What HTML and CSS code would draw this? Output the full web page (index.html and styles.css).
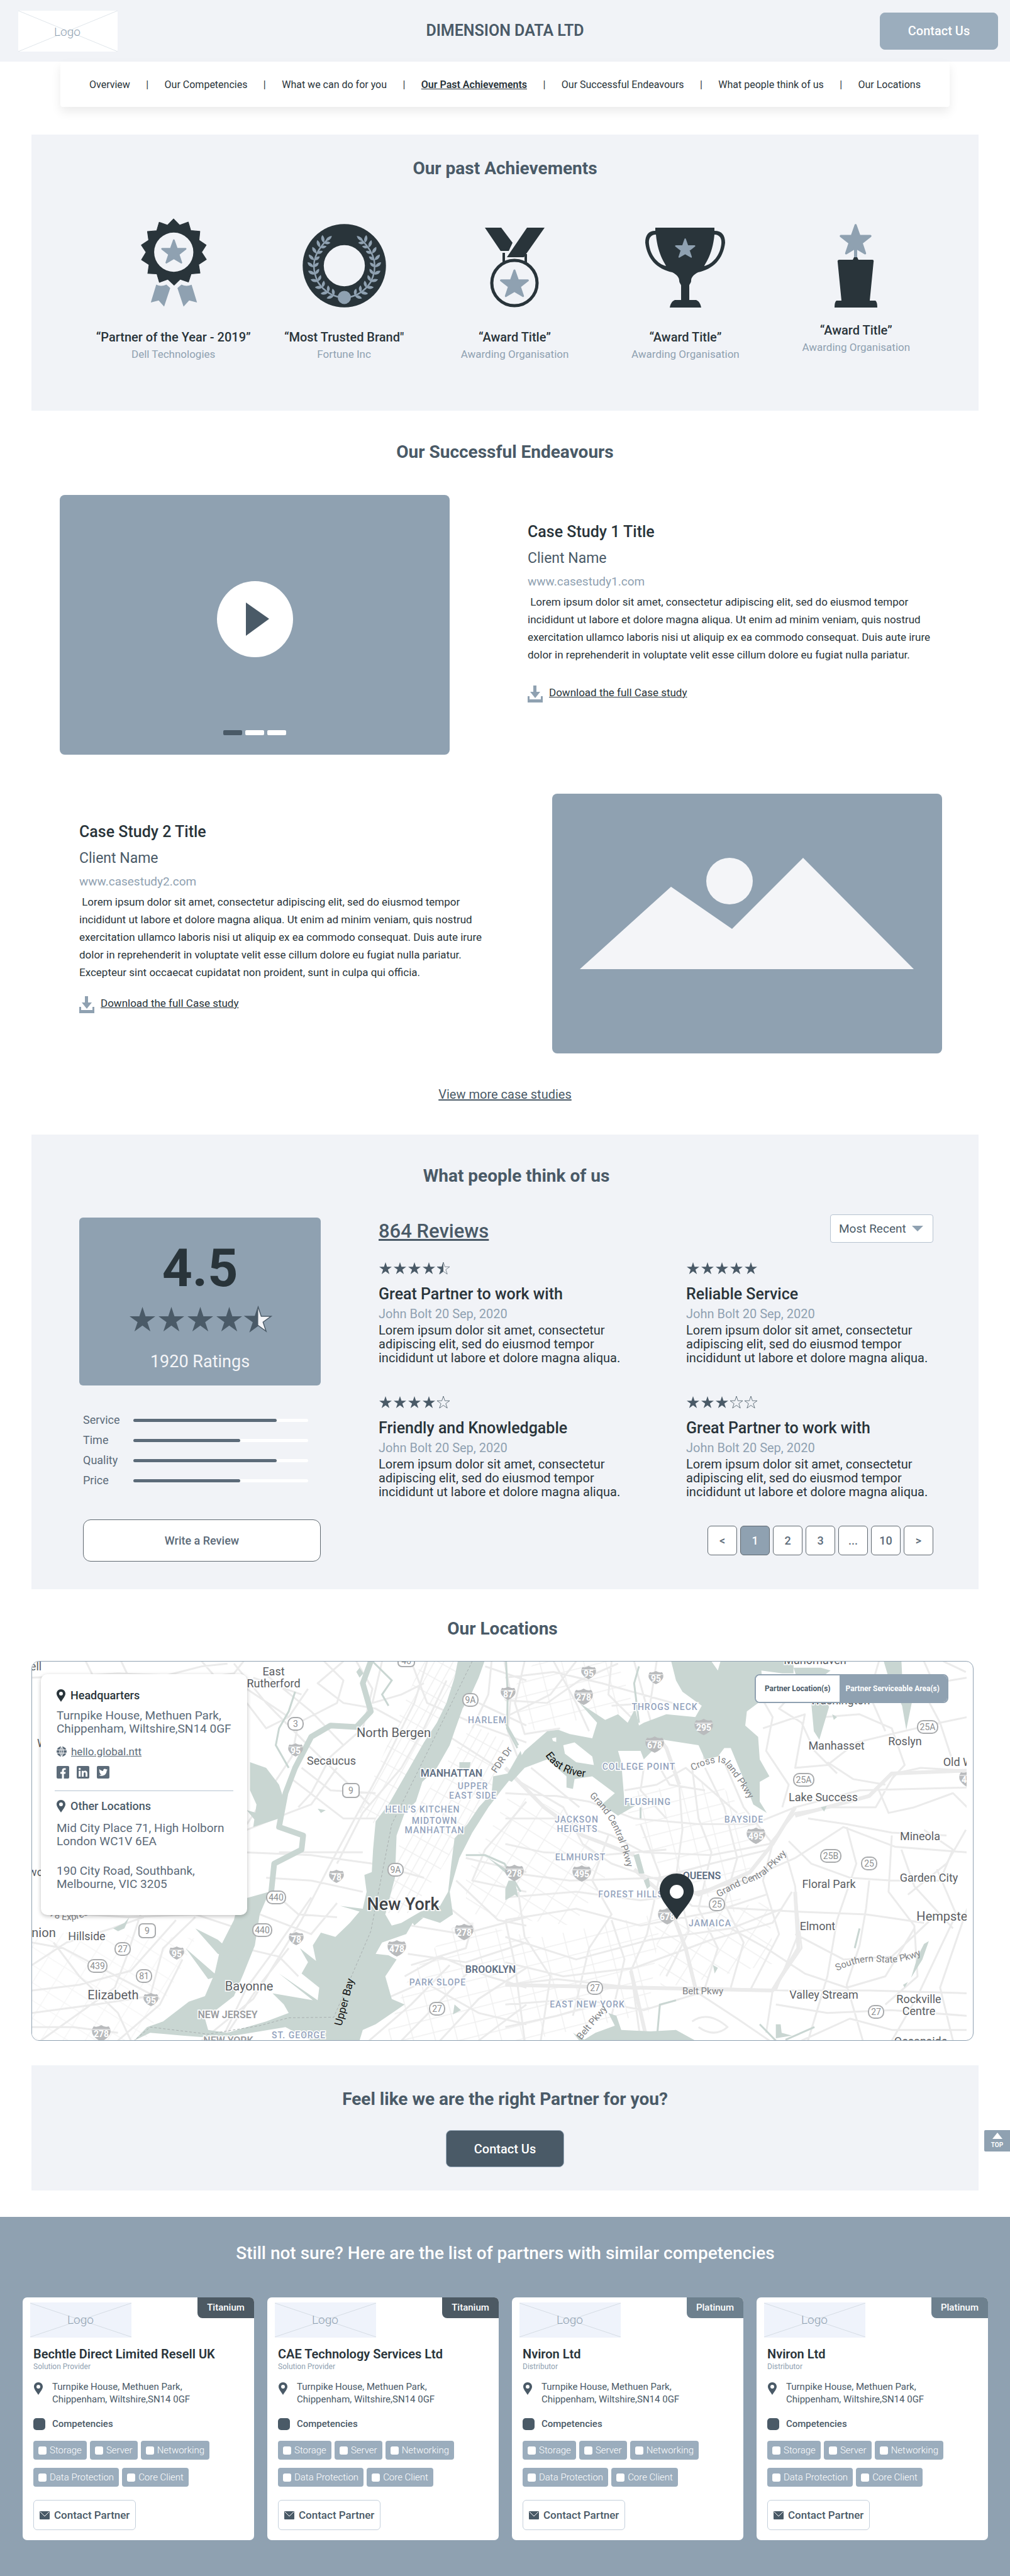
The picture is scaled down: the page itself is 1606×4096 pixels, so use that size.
FILE: index.html
```html
<!DOCTYPE html>
<html lang="en">
<head>
<meta charset="utf-8">
<meta name="viewport" content="width=device-width, initial-scale=1">
<title>Dimension Data Ltd</title>
<link rel="stylesheet" href="styles.css">
</head>
<body>
<svg class="defs" aria-hidden="true">
  <symbol id="star" viewBox="-1 -1 22 21"><path d="M10 0L12.4 7.3H20L13.8 11.8L16.2 19L10 14.5L3.8 19L6.2 11.8L0 7.3H7.6Z" fill="#4a5a67"/></symbol>
  <symbol id="star-half" viewBox="-1 -1 22 21"><path d="M10 0L12.4 7.3H20L13.8 11.8L16.2 19L10 14.5L3.8 19L6.2 11.8L0 7.3H7.6Z" fill="#f4f5f8" stroke="#4a5a67" stroke-width=".7"/><path d="M10 0V14.5L3.8 19L6.2 11.8L0 7.3H7.6Z" fill="#4a5a67"/></symbol>
  <symbol id="star-empty" viewBox="-1 -1 22 21"><path d="M10 0L12.4 7.3H20L13.8 11.8L16.2 19L10 14.5L3.8 19L6.2 11.8L0 7.3H7.6Z" fill="none" stroke="#4a5a67" stroke-width=".8"/></symbol>
  <symbol id="award-star" viewBox="-1 -1 22 21"><path d="M10 .5L12.4 7.3L19.4 7.4L13.8 11.8L16 18.4L10 14.8L4 18.4L6.2 11.8L.6 7.4L7.6 7.3Z" fill="#8fa1b1" stroke="#8fa1b1" stroke-width="1.4" stroke-linejoin="round"/></symbol>
  <symbol id="pin" viewBox="0 0 14 20"><path fill-rule="evenodd" d="M7 0C11 0 14 3 14 7C14 11 10 15 7 20C4 15 0 11 0 7C0 3 3 0 7 0ZM7 4A3 3 0 1 0 7 10A3 3 0 1 0 7 4Z" fill="currentColor"/></symbol>
  <symbol id="download" viewBox="0 0 24 27"><path d="M9 0H14V10H20L12 20L4 10H9ZM0 17H3V22H21V17H24V27H0Z" fill="#8fa1b1"/></symbol>
  <symbol id="mail" viewBox="0 0 16 13"><rect width="16" height="13" rx="1" fill="#4a5a67"/><path d="M1 1L8 8L15 1" fill="none" stroke="#fff" stroke-width="1"/></symbol>
</svg>

<header class="header">
  <svg class="logo-box logo-box--header" viewBox="0 0 158 65" role="img" aria-label="Logo"><rect width="158" height="65" rx="2" fill="#fff"/><path d="M0 0L158 65M0 65L158 0" stroke="#dfe5ea"/><text x="78" y="40" text-anchor="middle">Logo</text></svg>
  <h1 class="header__title">DIMENSION DATA LTD</h1>
  <button class="button button--light" type="button">Contact Us</button>
</header>

<nav class="tabs" aria-label="Sections">
  <a href="#overview">Overview</a><span>|</span>
  <a href="#competencies">Our Competencies</a><span>|</span>
  <a href="#services">What we can do for you</a><span>|</span>
  <a class="is-active" href="#achievements">Our Past Achievements</a><span>|</span>
  <a href="#endeavours">Our Successful Endeavours</a><span>|</span>
  <a href="#reviews">What people think of us</a><span>|</span>
  <a href="#locations">Our Locations</a>
</nav>

<main>
<section class="panel achievements" id="achievements">
  <h2 class="heading">Our past Achievements</h2>
  <ul class="awards">
    <li class="award">
      <svg width="106" height="142" viewBox="30 20 380 510">
        <path d="M220 24L255 60L304 42L318 90L370 95L365 146L406 173L380 214L407 255L363 284L371 333L320 338L305 384L258 368L223 402L187 368L139 386L125 338L73 335L80 285L37 257L63 214L36 173L78 146L71 96L124 91L138 43L185 60Z" fill="#29343a" stroke="#29343a" stroke-width="4" stroke-linejoin="round"/>
        <circle cx="221" cy="214" r="112" fill="#f1f3f7"/>
        <use href="#award-star" x="143" y="132" width="157" height="156"/>
        <path d="M121 399Q150 413 179 399L201 419L166 525L135 490L90 501ZM323 400Q293 412 265 399L242 419L277 525L309 490L354 501Z" fill="#8fa1b1"/>
      </svg>
      <h3>“Partner of the Year - 2019”</h3><p>Dell Technologies</p>
    </li>
    <li class="award">
      <svg width="133" height="133" viewBox="962 42 480 480">
        <defs><g id="pair"><path d="M0 2C-20 2 -32 -8 -34 -26C-14 -24 -2 -14 0 2Z"/><path d="M0 2C20 2 29 -8 30 -24C14 -22 2 -14 0 2Z"/></g></defs>
        <circle cx="1202" cy="282" r="239" fill="#29343a"/><circle cx="1202" cy="282" r="118" fill="#f1f3f7"/>
        <g id="branch">
          <path d="M1180 463C1120 455 1075 415 1050 375C1010 290 1020 215 1105 132" fill="none" stroke="#8fa1b1" stroke-width="9"/>
          <g fill="#8fa1b1">
            <use href="#pair" transform="translate(1140 452) rotate(-60)"/><use href="#pair" transform="translate(1108 433) rotate(-50)"/><use href="#pair" transform="translate(1076 405) rotate(-38)"/><use href="#pair" transform="translate(1050 370) rotate(-25)"/><use href="#pair" transform="translate(1033 330) rotate(-12)"/><use href="#pair" transform="translate(1025 288)"/><use href="#pair" transform="translate(1028 248) rotate(8)"/><use href="#pair" transform="translate(1042 210) rotate(20)"/><use href="#pair" transform="translate(1062 175) rotate(32)"/><use href="#pair" transform="translate(1084 148) rotate(42)"/>
            <path d="M0 2C-12 -6 -14 -22 -6 -42C8 -28 10 -12 0 2Z" transform="translate(1098 138) rotate(58)"/>
          </g>
        </g>
        <use href="#branch" transform="translate(2404 0) scale(-1 1)"/>
        <circle cx="1202" cy="464" r="38" fill="#8fa1b1"/>
      </svg>
      <h3>“Most Trusted Brand"</h3><p>Fortune Inc</p>
    </li>
    <li class="award">
      <svg width="95" height="127" viewBox="0 0 95 127">
        <path d="M0 0H26L44 24L38 37H25ZM67 0H95L62 47H35Z" fill="#29343a"/>
        <path d="M30 40V56M65 42V56" stroke="#29343a" stroke-width="4"/>
        <circle cx="47" cy="88" r="36" fill="none" stroke="#29343a" stroke-width="5"/>
        <use href="#award-star" x="22" y="64" width="50" height="49"/>
      </svg>
      <h3>“Award Title”</h3><p>Awarding Organisation</p>
    </li>
    <li class="award">
      <svg width="127" height="127" viewBox="0 0 127 127">
        <path d="M16 0H110V5C122 5 127 12 127 24C124 50 108 66 84 71C76 75 73 80 73 84C73 88 70 90 70 92V115H81C86 117 88 122 89 127H39C40 122 42 117 47 115H57V92C57 90 54 88 54 84C54 80 51 75 43 71C19 66 3 50 0 24C0 12 5 5 16 5Z" fill="#29343a"/>
        <path d="M17 11C8 11 5 18 6 26C8 44 20 58 33 61C34 60 20 45 17 11ZM110 11C119 11 122 18 121 26C119 44 107 58 94 61C93 60 107 45 110 11Z" fill="#f1f3f7"/>
        <use href="#award-star" x="46" y="15" width="35" height="35"/>
      </svg>
      <h3>“Award Title”</h3><p>Awarding Organisation</p>
    </li>
    <li class="award award--tight">
      <svg width="68" height="134" viewBox="0 0 68 134">
        <path d="M31 40H36V56H31Z" fill="#8fa1b1"/><use href="#award-star" x="6" y="-1" width="55" height="53"/>
        <path d="M29 58L31 54H36L38 58H60Q63 58 62 62L56 123H65Q68 125 68 134H0Q0 125 3 123H11L5 62Q4 58 8 58Z" fill="#29343a"/>
      </svg>
      <h3>“Award Title”</h3><p>Awarding Organisation</p>
    </li>
  </ul>
</section>

<section class="endeavours" id="endeavours">
  <h2 class="heading">Our Successful Endeavours</h2>
  <article class="case">
    <div class="case__media case__media--video">
      <button class="play" type="button" aria-label="Play video"><svg width="37" height="53" viewBox="0 0 37 53"><path d="M0 0L37 26L0 53Z" fill="#4a5a67"/></svg></button>
      <div class="dots"><i class="is-active"></i><i></i><i></i></div>
    </div>
    <div class="case__text">
      <h3>Case Study 1 Title</h3>
      <p class="case__client">Client Name</p>
      <a class="case__url" href="#case1">www.casestudy1.com</a>
      <p class="case__body">&nbsp;Lorem ipsum dolor sit amet, consectetur adipiscing elit, sed do eiusmod tempor incididunt ut labore et dolore magna aliqua. Ut enim ad minim veniam, quis nostrud exercitation ullamco laboris nisi ut aliquip ex ea commodo consequat. Duis aute irure dolor in reprehenderit in voluptate velit esse cillum dolore eu fugiat nulla pariatur.</p>
      <a class="download" href="#download1"><svg width="24" height="27"><use href="#download"/></svg><span>Download the full Case study</span></a>
    </div>
  </article>
  <article class="case case--reverse">
    <div class="case__text">
      <h3>Case Study 2 Title</h3>
      <p class="case__client">Client Name</p>
      <a class="case__url" href="#case2">www.casestudy2.com</a>
      <p class="case__body">&nbsp;Lorem ipsum dolor sit amet, consectetur adipiscing elit, sed do eiusmod tempor incididunt ut labore et dolore magna aliqua. Ut enim ad minim veniam, quis nostrud exercitation ullamco laboris nisi ut aliquip ex ea commodo consequat. Duis aute irure dolor in reprehenderit in voluptate velit esse cillum dolore eu fugiat nulla pariatur. Excepteur sint occaecat cupidatat non proident, sunt in culpa qui officia.</p>
      <a class="download" href="#download2"><svg width="24" height="27"><use href="#download"/></svg><span>Download the full Case study</span></a>
    </div>
    <div class="case__media">
      <svg viewBox="0 0 620 413" width="100%"><path d="M44 279L189 148L286 215L399 102L575 279Z" fill="#f4f5f8"/><circle cx="282" cy="139" r="37" fill="#f4f5f8"/></svg>
    </div>
  </article>
  <a class="more" href="#cases">View more case studies</a>
</section>

<section class="panel reviews" id="reviews">
  <h2 class="heading">What people think of us</h2>
  <div class="reviews__grid">
    <div class="summary">
      <div class="score">
        <strong>4.5</strong>
        <div class="stars stars--large"><svg><use href="#star"/></svg><svg><use href="#star"/></svg><svg><use href="#star"/></svg><svg><use href="#star"/></svg><svg><use href="#star-half"/></svg></div>
        <span>1920 Ratings</span>
      </div>
      <dl class="bars">
        <dt>Service</dt><dd><i style="width:82%"></i></dd>
        <dt>Time</dt><dd><i style="width:61%"></i></dd>
        <dt>Quality</dt><dd><i style="width:82%"></i></dd>
        <dt>Price</dt><dd><i style="width:61%"></i></dd>
      </dl>
      <button class="write" type="button">Write a Review</button>
    </div>
    <div>
      <div class="reviews__bar">
        <a class="count" href="#all-reviews">864 Reviews</a>
        <div class="sort"><select aria-label="Sort reviews"><option>Most Recent</option></select><svg width="18" height="9" viewBox="0 0 18 9"><path d="M0 0H18L9 9Z" fill="#8fa1b1"/></svg></div>
      </div>
      <div class="reviews__list">
        <article class="review">
          <div class="stars"><svg><use href="#star"/></svg><svg><use href="#star"/></svg><svg><use href="#star"/></svg><svg><use href="#star"/></svg><svg><use href="#star-half"/></svg></div>
          <h3>Great Partner to work with</h3><p class="review__meta">John Bolt 20 Sep, 2020</p>
          <p>Lorem ipsum dolor sit amet, consectetur adipiscing elit, sed do eiusmod tempor incididunt ut labore et dolore magna aliqua.</p>
        </article>
        <article class="review">
          <div class="stars"><svg><use href="#star"/></svg><svg><use href="#star"/></svg><svg><use href="#star"/></svg><svg><use href="#star"/></svg><svg><use href="#star"/></svg></div>
          <h3>Reliable Service</h3><p class="review__meta">John Bolt 20 Sep, 2020</p>
          <p>Lorem ipsum dolor sit amet, consectetur adipiscing elit, sed do eiusmod tempor incididunt ut labore et dolore magna aliqua.</p>
        </article>
        <article class="review">
          <div class="stars"><svg><use href="#star"/></svg><svg><use href="#star"/></svg><svg><use href="#star"/></svg><svg><use href="#star"/></svg><svg><use href="#star-empty"/></svg></div>
          <h3>Friendly and Knowledgable</h3><p class="review__meta">John Bolt 20 Sep, 2020</p>
          <p>Lorem ipsum dolor sit amet, consectetur adipiscing elit, sed do eiusmod tempor incididunt ut labore et dolore magna aliqua.</p>
        </article>
        <article class="review">
          <div class="stars"><svg><use href="#star"/></svg><svg><use href="#star"/></svg><svg><use href="#star"/></svg><svg><use href="#star-empty"/></svg><svg><use href="#star-empty"/></svg></div>
          <h3>Great Partner to work with</h3><p class="review__meta">John Bolt 20 Sep, 2020</p>
          <p>Lorem ipsum dolor sit amet, consectetur adipiscing elit, sed do eiusmod tempor incididunt ut labore et dolore magna aliqua.</p>
        </article>
      </div>
      <nav class="pages" aria-label="Review pages">
        <button type="button">&lt;</button><button class="is-active" type="button">1</button><button type="button">2</button><button type="button">3</button><button type="button">...</button><button type="button">10</button><button type="button">&gt;</button>
      </nav>
    </div>
  </div>
</section>

<section class="locations" id="locations">
  <h2 class="heading">Our Locations</h2>
  <div class="map">
    <svg class="map__canvas" viewBox="0 0 1486 602" preserveAspectRatio="xMidYMid slice">
      <defs>
        <pattern id="g1" width="26" height="13" patternUnits="userSpaceOnUse" patternTransform="rotate(-61)"><path d="M0 0H26M0 0V13" stroke="#efefef" stroke-width="3" fill="none"/></pattern>
        <pattern id="g2" width="34" height="22" patternUnits="userSpaceOnUse" patternTransform="rotate(-14)"><path d="M0 0H34M0 0V22" stroke="#f0f0f0" stroke-width="3" fill="none"/></pattern>
        <pattern id="g3" width="30" height="24" patternUnits="userSpaceOnUse" patternTransform="rotate(32)"><path d="M0 0H30M0 0V24" stroke="#f0f0f0" stroke-width="3" fill="none"/></pattern>
        <symbol id="is" viewBox="0 0 30 26" overflow="visible"><path d="M3 2Q9 4 15 0Q21 4 27 2Q31 7 29 14Q25 22 15 26Q5 22 1 14Q-1 7 3 2Z" fill="#b9bbbd"/><path d="M1 7H29" stroke="#fff"/></symbol>
        <path id="cross-island" d="M1050 174Q1085 156 1100 162Q1116 178 1145 228"/>
        <path id="gcp-north" d="M886 214Q912 238 926 268T950 345"/>
        <path id="gcp-south" d="M1092 375Q1124 355 1150 348Q1172 338 1208 296"/>
        <path id="southern" d="M1280 492Q1316 474 1350 478T1424 462"/>
        <path id="east-river" d="M816 149Q838 182 886 184"/>
        <path id="express" d="M20 400Q60 424 100 396"/>
      </defs>
      <rect width="1486" height="602" fill="#fff"/>
      <path d="M700 100L760 130L730 200L650 330L600 400L560 400L580 300L620 220Z" fill="url(#g1)"/>
      <path d="M600 500L680 410L800 440L1000 400L980 560L790 602L560 602Z" fill="url(#g2)"/>
      <path d="M800 0H930L960 80L880 90L800 110L750 60Z" fill="url(#g2)"/>
      <path d="M690 340L760 210L860 240L920 330L860 420L690 400Z" fill="url(#g3)"/>
      <path d="M930 210L1090 190L1160 270L1120 400L1000 330Z" fill="url(#g2)"/>
      <path d="M990 420L1170 380L1180 480L1000 520Z" fill="url(#g3)"/>
      <path d="M620 0H690L640 140L560 270L520 240Z" fill="url(#g1)"/>
      <path d="M60 430L260 440L180 602H0V440Z" fill="url(#g3)" opacity=".6"/>
      <g class="roads">
        <g transform="matrix(.5121 0 0 .4481 -17 -82)">
          <path d="M33 240L160 235L300 225L450 232L560 200L640 190M200 182L225 240M310 182L330 230M560 182L600 235L660 225L690 182M660 190L760 330L890 480L1000 600L1080 690M760 230L900 360L1000 480M700 330L760 420L830 380L890 280M720 240L870 300M700 280L830 380M940 182L1000 250L980 330L860 400L840 520L700 760M1040 182L1090 280L1060 420L960 520L900 650L860 700M1120 182L1090 330L1180 300L1250 260M1260 182L1220 330L1120 560L960 900L870 1100L720 1380L560 1528M1320 250L1250 420L1180 560L1060 720L980 900M1000 182L920 260L1000 330L1100 350L1180 400M870 560L960 640L1100 650M840 600L1000 740L1100 740M700 780L830 720L900 690L980 560M690 860L900 870L1090 900L1250 950M800 860L1060 860M760 950L900 960L1060 1000M780 1000L860 1080L980 1090M740 1080L900 1150L980 1040M690 1200L800 1230L860 1300M700 1140L540 1080L330 1090L200 1080M33 1180L130 1200L280 1290L430 1380M33 1260L140 1180L280 1130L380 1090M33 1350L180 1330L340 1280L480 1100M33 1430L230 1400L400 1370L440 1200L540 1090M60 1528L180 1430L290 1340L330 1220L370 1080M100 1180L180 1300L300 1430L340 1528M33 1480L160 1480L300 1500M500 1240L430 1400L300 1528M620 1528L700 1340L790 1200L900 1020M640 1500L740 1330L830 1200"/>
          <path d="M1210 182L1260 330L1400 400L1568 470M1440 200L1568 250M1460 182L1450 300L1400 420M1420 330L1568 410M1330 450L1480 560M1500 182L1520 300L1510 430L1540 520M1568 680L1440 850L1400 960L1568 1000M1380 880L1568 930M1350 960L1480 1100L1568 1120M1310 1040L1400 1120L1380 1200L1210 1260M1210 1120L1370 1150L1568 1090M1200 1220L1380 1250L1568 1180M1190 1300L1300 1230L1450 1300L1568 1340M1130 1380L1250 1320L1420 1430L1568 1470M1080 1528L1210 1400L1330 1260M1180 1528L1290 1400L1400 1270M1300 1528L1420 1380L1568 1270M1420 1528L1568 1400"/>
        </g>
        <g transform="matrix(.5121 0 0 .4481 752.5 -82)">
          <path d="M0 240L150 220L300 260L520 330M60 182L30 330L60 440L170 420M150 182L220 330L260 430M330 182L320 300L390 380M400 182L460 430M470 182L450 330L330 340M0 320L130 330L230 250L350 190M0 380L140 300L220 182M0 650L160 660L260 680L400 740L600 760L770 760L900 700L1100 640L1434 630M30 600L180 700L240 830L330 900L480 960L580 1050L900 1070L1120 1080L1300 1110M80 560L230 700M0 740L170 740L330 800L430 860L640 870L820 830L900 720L1000 700L1150 700L1210 580L1290 560L1434 570M0 830L120 860L300 870L500 850M0 930L200 960L480 950L640 900L820 850M0 1020L220 1000L420 1030L560 1010L740 960L900 880L1050 770L1210 840L1434 860M0 1100L220 1060L420 1120L650 1070L810 1010M0 1160L220 1240L450 1170L700 1130L860 1060M0 1250L180 1300L400 1270L640 1170L830 1110L890 1000M0 1330L160 1310L400 1340L600 1340L870 1350L1130 1350L1434 1360M0 1400L230 1380L430 1420L600 1360L720 1450L820 1528M0 1480L160 1440L280 1400M60 1528L30 1260L0 1100M110 1528L140 1300L60 1160L40 1000M210 1440L260 1200L330 1080L270 960L320 800M330 1440L370 1240L330 1100M420 1528L390 1280L440 1150L480 940L420 760M500 1300L570 1140L530 950L550 780L540 620M620 1340L660 1200L600 1060L640 860L600 740L580 560M700 1340L740 1180L680 1040L720 880L680 700L620 560M760 1350L850 1150L800 960L830 830L740 700L680 540M840 1350L910 1150L900 980L870 860M430 560L420 640L500 740M470 540L510 620L620 640M370 640L470 620L560 560L720 720"/>
          <path d="M790 300L830 380L810 500L880 620L860 700M800 420L930 370L900 560L1000 550L1090 470L1200 440L1350 400L1434 380M990 380L1100 370L1200 420L1240 550L1200 600M1000 540L1080 600L1180 620M1130 300L1180 430M1280 250L1350 400L1390 540M1300 182L1330 260L1434 240M1360 182L1430 220M920 260L850 350L920 400L960 500L1030 580M1160 640L1190 720L1270 700L1390 650L1434 700M940 740L1060 760L1200 790L1370 800M880 820L950 900L1070 950L1200 960L1400 960M1200 800L1190 1000L1270 1120L1280 1300L1180 1400M1230 850L1270 980L1390 1130M1060 770L1090 900L1030 1100L1000 1300L940 1528M1130 960L1120 1060L1100 1190L1060 1330L1110 1528M900 1000L920 1200L830 1350L810 1500M700 1130L810 1200L930 1290L1060 1340L1180 1300L1270 1130M900 1150L1050 1240L1200 1230L1320 1100L1434 1080M840 1400L1000 1430L1200 1420L1434 1440M920 1528L1070 1450L1200 1490L1434 1490M1200 1528L1280 1370L1350 1200L1400 1080L1340 920M1390 1528L1350 1340L1410 1140L1434 1060M1300 780L1390 850L1350 960M1430 780L1370 900L1250 1010M1160 182L1130 300M580 1460Q630 1420 690 1480Q650 1520 600 1480"/>
          <path class="major" d="M460 430L500 490L540 620M616 410L620 530M900 700L830 830L760 930L600 1010L480 950M400 920L500 1020L560 1200L590 1340M900 1000L910 1200L830 1350L400 1340L0 1330M1434 570L1200 580L1130 660L900 730M390 1280L440 1528M0 560L120 700L240 800L400 870"/>
        </g>
      </g>
      <g class="water">
        <g transform="matrix(.5121 0 0 .4481 -17 -82)">
          <path d="M1355 182L1345 240L1320 330L1290 400L1250 470L1190 590L1140 690L1100 750L1092 850L1088 930L1065 940L1072 1000L1060 1060L990 1050L1050 1070L1020 1110L975 1160L930 1145L905 1190L915 1245L865 1200L890 1250L870 1290L925 1340L920 1385L800 1290L905 1385L780 1360L815 1400L830 1430L760 1460L640 1500L580 1490L570 1450L660 1370L690 1290L725 1190L740 1080L770 1000L675 1030L660 1100L620 1190L600 1290L570 1370L520 1390L440 1460L390 1480L350 1528L400 1500L500 1510L610 1520L820 1480L900 1528H1050L1060 1490L1100 1470L1190 1400L1150 1380L1130 1300L1165 1240L1140 1225L1100 1220L1120 1180L1195 1150L1215 1110L1245 1090L1300 1110L1340 1080L1330 1000L1360 880L1400 790L1450 700L1490 640L1560 540L1550 500L1510 580L1465 590L1460 650L1420 700L1385 760L1345 810L1335 900L1325 1000L1300 1050L1240 1070L1180 1110L1150 1120L1130 1080L1160 950L1165 800L1190 720L1225 680L1245 610L1290 560L1330 480L1345 430L1370 350L1400 290L1420 240L1438 182Z"/>
          <path d="M710 540L760 560L800 620L820 690L800 740L720 770L730 690L710 640ZM700 710L790 740L735 760ZM540 1130L610 1170L680 1240L610 1220ZM510 1200L610 1300L580 1310ZM1040 220L1050 205L1062 225L1050 240ZM285 1130L320 1110L335 1090L320 1130L300 1140ZM1360 540L1395 540L1390 570L1360 560ZM1210 1100L1250 1090L1220 1120ZM1345 1400L1365 1420L1340 1435ZM920 705L945 710L930 720ZM1450 880L1520 930L1510 940"/>
          <path class="river" d="M775 1010L785 900L870 850L875 800L800 770L820 650L850 560L900 450L960 410L1040 415L1085 360L1060 260L1085 182"/>
          <path class="stream" d="M850 290L830 360L800 420L790 480L830 560M1090 182L1150 250L1120 300L1140 340M1505 182L1510 300L1508 420L1540 490M1380 870L1440 870L1500 900L1550 1000"/>
          <path class="ferry" d="M1400 182L1150 760L1085 1140L970 1445L830 1447L740 1475L580 1505L400 1480L350 1528"/>
        </g>
        <g transform="matrix(.5121 0 0 .4481 752.5 -82)">
          <path d="M515 182H640L660 215L668 182H895V225L860 225L795 215L800 280L820 300L750 360L745 410L785 450L790 530L820 590L790 610L790 680L812 720L770 690L740 600L700 490L680 490L660 520L620 530L600 480L490 460L430 530L420 500L350 500L360 540L370 680L410 690L350 730L300 690L340 650L270 590L215 600L210 635L190 630L190 590L130 530L60 560L20 610L0 600L60 500L130 430L165 425L200 440L270 455L285 400L230 330L310 390L350 370L380 400L403 350L415 410L430 400L500 370L590 380L610 340L550 290L555 300L530 250Z"/>
          <path d="M1175 182H1230L1235 300L1262 330L1245 425L1232 340L1190 240ZM895 205L980 205L1010 215L980 240L1005 345L975 460L958 430L950 330L905 240ZM240 1528L280 1500L340 1475L320 1430L345 1440L360 1490L450 1495L530 1490L590 1528ZM398 870L415 865L432 935L415 935ZM430 960L445 950L450 980L440 990ZM1300 1185L1315 1175L1295 1240L1260 1305L1280 1230ZM1235 1330L1250 1320L1240 1340ZM980 700L998 695L990 715ZM645 1260L660 1270L650 1290ZM0 1030L30 1010L40 1020L30 960L10 960L0 990ZM840 1470L855 1470L858 1500L890 1510L840 1520ZM210 1500L250 1528H230ZM1015 370L1030 380L1020 390Z"/>
          <path class="stream" d="M415 400L400 260L415 200M420 700L420 740M1100 1130L1085 1200M470 1528L480 1400L530 1385M790 1470L840 1528M960 1480L870 1525M0 400L40 480"/>
          <path d="M180 480L215 470L270 520L275 550L220 540L185 510ZM145 455L158 452L158 468L148 465Z" fill="#fff"/>
        </g>
      </g>
      <g class="oval">
        <g><rect x="685" y="51" width="24" height="20" rx="9"/><text x="697" y="66">9A</text></g><g><rect x="407" y="89" width="24" height="20" rx="9"/><text x="419" y="104">3</text></g><g><rect x="494" y="194" width="26" height="22" rx="6"/><text x="507" y="210">9</text></g><g><rect x="566" y="321" width="24" height="20" rx="9"/><text x="578" y="336">9A</text></g><g><rect x="373" y="365" width="30" height="20" rx="9"/><text x="388" y="380">440</text></g><g><rect x="351" y="417" width="30" height="20" rx="9"/><text x="366" y="432">440</text></g><g><rect x="170" y="417" width="26" height="22" rx="6"/><text x="183" y="433">9</text></g><g><rect x="132" y="447" width="24" height="20" rx="9"/><text x="144" y="462">27</text></g><g><rect x="89" y="474" width="30" height="20" rx="9"/><text x="104" y="489">439</text></g><g><rect x="166" y="490" width="24" height="20" rx="9"/><text x="178" y="505">81</text></g><g><rect x="632" y="542" width="24" height="20" rx="9"/><text x="644" y="557">27</text></g><g><rect x="1077" y="376" width="24" height="20" rx="9"/><text x="1089" y="391">25</text></g><g><rect x="883" y="509" width="24" height="20" rx="9"/><text x="895" y="524">27</text></g><g><rect x="1211" y="178" width="32" height="20" rx="9"/><text x="1227" y="193">25A</text></g><g><rect x="1408" y="94" width="32" height="20" rx="9"/><text x="1424" y="109">25A</text></g><g><rect x="1254" y="299" width="32" height="20" rx="9"/><text x="1270" y="314">25B</text></g><g><rect x="1319" y="311" width="24" height="20" rx="9"/><text x="1331" y="326">25</text></g><g><rect x="1330" y="547" width="24" height="20" rx="9"/><text x="1342" y="562">27</text></g><g><rect x="582" y="-12" width="26" height="20" rx="6"/><text x="595" y="4">46</text></g>
      </g>
      <g class="interstate">
        <use href="#is" x="407" y="128" width="24" height="25"/><text x="419" y="147">95</text><use href="#is" x="745" y="38" width="24" height="25"/><text x="757" y="57">87</text><use href="#is" x="752" y="323" width="30" height="26"/><text x="767" y="342">278</text><use href="#is" x="472" y="329" width="24" height="25"/><text x="484" y="348">78</text><use href="#is" x="408" y="428" width="24" height="25"/><text x="420" y="447">78</text><use href="#is" x="218" y="451" width="24" height="25"/><text x="230" y="470">95</text><use href="#is" x="177" y="525" width="24" height="25"/><text x="189" y="544">95</text><use href="#is" x="95" y="578" width="30" height="26"/><text x="110" y="597">278</text><use href="#is" x="565" y="443" width="30" height="26"/><text x="580" y="462">478</text><use href="#is" x="672" y="417" width="30" height="26"/><text x="687" y="436">278</text><use href="#is" x="873" y="5" width="24" height="25"/><text x="885" y="24">95</text><use href="#is" x="980" y="13" width="24" height="25"/><text x="992" y="32">95</text><use href="#is" x="862" y="43" width="30" height="26"/><text x="877" y="62">278</text><use href="#is" x="1053" y="91" width="30" height="26"/><text x="1068" y="110">295</text><use href="#is" x="975" y="119" width="30" height="26"/><text x="990" y="138">678</text><use href="#is" x="1136" y="264" width="30" height="26"/><text x="1151" y="283">495</text><use href="#is" x="859" y="324" width="30" height="26"/><text x="874" y="343">495</text><use href="#is" x="995" y="392" width="30" height="26"/><text x="1010" y="411">678</text><use href="#is" x="1474" y="174" width="30" height="26"/><text x="1482" y="193">4</text>
      </g>
      <g class="town">
        <text x="6" y="14">ell</text><text x="384" y="22">East</text><text x="384" y="41">Rutherford</text><text x="476" y="164">Secaucus</text><text x="87" y="443">Hillside</text><text x="16" y="136">W</text><text x="6" y="341">wo</text><text x="1245" y="4">Manorhaven</text><text x="1285" y="68">Washington</text><text x="1279" y="140">Manhasset</text><text x="1388" y="133">Roslyn</text><text x="1502" y="166">Old Westbury</text><text x="1258" y="222">Lake Success</text><text x="1412" y="284">Mineola</text><text x="1426" y="350">Garden City</text><text x="1267" y="360">Floral Park</text><text x="1249" y="427">Elmont</text><text x="1259" y="536">Valley Stream</text><text x="1410" y="543">Rockville</text><text x="1410" y="562">Centre</text><text x="1413" y="610">Oceanside</text>
        <g class="town--big"><text x="575" y="120">North Bergen</text><text x="129" y="537">Elizabeth</text><text x="345" y="523">Bayonne</text><text x="12" y="438">Union</text><text x="1458" y="412">Hempstead</text></g>
        <text class="city" x="590" y="395">New York</text>
      </g>
      <g class="borough"><text x="667" y="183">MANHATTAN</text><text x="729" y="495">BROOKLYN</text><text x="1065" y="346">QUEENS</text><g fill="#9a9c9f"><text x="311" y="567">NEW JERSEY</text><text x="312" y="608">NEW YORK</text></g></g>
      <g class="district"><text x="724" y="98">HARLEM</text><text x="701" y="203">UPPER</text><text x="701" y="218">EAST SIDE</text><text x="621" y="240">HELL'S KITCHEN</text><text x="640" y="258">MIDTOWN</text><text x="640" y="273">MANHATTAN</text><text x="645" y="515">PARK SLOPE</text><text x="424" y="599">ST. GEORGE</text><text x="1006" y="77">THROGS NECK</text><text x="965" y="172">COLLEGE POINT</text><text x="979" y="228">FLUSHING</text><text x="866" y="256">JACKSON</text><text x="867" y="271">HEIGHTS</text><text x="1132" y="256">BAYSIDE</text><text x="872" y="316">ELMHURST</text><text x="952" y="375">FOREST HILLS</text><text x="1078" y="421">JAMAICA</text><text x="883" y="550">EAST NEW YORK</text></g>
      <g class="road-name"><text><textPath href="#cross-island">Cross Island Pkwy</textPath></text><text><textPath href="#gcp-north">Grand Central Pkwy</textPath></text><text><textPath href="#gcp-south">Grand Central Pkwy</textPath></text><text><textPath href="#southern">Southern State Pkwy</textPath></text><text><textPath href="#express">I-78 Express</textPath></text><text x="1034" y="529">Belt Pkwy</text><text transform="translate(873 602) rotate(-50)">Belt Pkwy</text><text transform="translate(738 178) rotate(-56)">FDR Dr</text></g>
      <g class="water-name"><text><textPath href="#east-river">East River</textPath></text><text transform="translate(492 580) rotate(-75)">Upper Bay</text></g>
      <path d="M1025 337C1040 337 1052 348 1052 364C1052 379 1037 392 1025 410C1013 392 998 379 998 364C998 348 1010 337 1025 337Z" fill="#29343a"/>
      <circle cx="1025" cy="366" r="11" fill="#fff"/>
    </svg>
    <aside class="places">
      <h3 class="places__title"><svg width="14" height="20"><use href="#pin"/></svg>Headquarters</h3>
      <p>Turnpike House, Methuen Park, Chippenham, Wiltshire,SN14 0GF</p>
      <a class="places__web" href="#web"><svg width="16" height="16" viewBox="0 0 16 16"><circle cx="8" cy="8" r="8" fill="#5c6b79"/><path d="M0 5.500H16M0 10.500H16M8 0V16M8 0Q2 8 8 16M8 0Q14 8 8 16" fill="none" stroke="#fff"/></svg><span>hello.global.ntt</span></a>
      <div class="social">
        <a href="#facebook" aria-label="Facebook"><svg viewBox="0 0 20 20"><rect width="20" height="20" rx="2" fill="#5c6b79"/><path d="M8.500 20V12.500H6V9.500H8.500V7.500C8.500 5 10 3.500 12.300 3.500H14.500V6.300H13C12 6.300 11.600 6.900 11.600 7.800V9.500H14.400L14 12.500H11.600V20Z" fill="#fff"/></svg></a>
        <a href="#linkedin" aria-label="LinkedIn"><svg viewBox="0 0 20 20"><rect width="20" height="20" rx="2" fill="#5c6b79"/><circle cx="4.700" cy="4.700" r="1.700" fill="#fff"/><path d="M3.200 7.700H6.200V17H3.200ZM8 7.700H10.900V9C12.500 6.700 17 7 17 11.500V17H14.100V12C14.100 9.300 11 9.500 11 12V17H8Z" fill="#fff"/></svg></a>
        <a href="#twitter" aria-label="Twitter"><svg viewBox="0 0 20 20"><rect width="20" height="20" rx="2" fill="#5c6b79"/><path d="M17 5.800C16.500 6.100 16 6.200 15.400 6.300C16 6 16.400 5.400 16.600 4.800C16 5.100 15.400 5.300 14.800 5.500C12.800 3.500 9.600 5 10.100 8C7.700 7.900 5.500 6.700 4.100 5C3.300 6.400 3.800 8 5 8.800C4.500 8.800 4.100 8.700 3.700 8.500C3.700 9.900 4.700 11 6 11.300C5.600 11.400 5.100 11.400 4.700 11.300C5.100 12.500 6.100 13.200 7.400 13.300C6.200 14.200 4.700 14.600 3.200 14.500C8.900 17.900 15.700 14.200 15.600 7.600C16.100 7 16.600 6.500 17 5.800Z" fill="#fff"/></svg></a>
      </div>
      <hr>
      <h3 class="places__title places__title--soft"><svg width="14" height="20"><use href="#pin"/></svg>Other Locations</h3>
      <p>Mid City Place 71, High Holborn London WC1V 6EA</p>
      <p>190 City Road, Southbank, Melbourne, VIC 3205</p>
    </aside>
    <div class="toggle"><button type="button">Partner Location(s)</button><button class="is-active" type="button">Partner Serviceable Area(s)</button></div>
  </div>
</section>

<div class="cta-row">
  <section class="panel cta">
    <h2 class="heading">Feel like we are the right Partner for you?</h2>
    <button class="button button--dark" type="button">Contact Us</button>
  </section>
  <a class="to-top" href="#"><svg width="16" height="10" viewBox="0 0 16 10"><path d="M8 0L16 10H0Z" fill="#fff"/></svg>TOP</a>
</div>
</main>

<footer class="footer">
  <h2 class="footer__title">Still not sure? Here are the list of partners with similar competencies</h2>
  <div class="partners">
    <article class="partner">
      <span class="badge">Titanium</span>
      <svg class="logo-box" viewBox="0 0 161 56" role="img" aria-label="Logo"><rect width="161" height="56" rx="2" fill="#eff3fb"/><path d="M0 1L161 55M0 55L161 1" stroke="#d5dce4"/><text x="80" y="34" text-anchor="middle">Logo</text></svg>
      <div class="partner__body">
        <h3>Bechtle Direct Limited Resell UK</h3><p class="kind">Solution Provider</p>
        <p class="address"><svg width="16" height="20"><use href="#pin"/></svg><span>Turnpike House, Methuen Park,<br>Chippenham, Wiltshire,SN14 0GF</span></p>
        <h4><i></i>Competencies</h4>
        <ul class="chips"><li><i></i>Storage</li><li><i></i>Server</li><li><i></i>Networking</li></ul>
        <ul class="chips"><li><i></i>Data Protection</li><li><i></i>Core Client</li></ul>
        <button class="contact" type="button"><svg width="16" height="13"><use href="#mail"/></svg>Contact Partner</button>
      </div>
    </article>
    <article class="partner">
      <span class="badge">Titanium</span>
      <svg class="logo-box" viewBox="0 0 161 56" role="img" aria-label="Logo"><rect width="161" height="56" rx="2" fill="#eff3fb"/><path d="M0 1L161 55M0 55L161 1" stroke="#d5dce4"/><text x="80" y="34" text-anchor="middle">Logo</text></svg>
      <div class="partner__body">
        <h3>CAE Technology Services Ltd</h3><p class="kind">Solution Provider</p>
        <p class="address"><svg width="16" height="20"><use href="#pin"/></svg><span>Turnpike House, Methuen Park,<br>Chippenham, Wiltshire,SN14 0GF</span></p>
        <h4><i></i>Competencies</h4>
        <ul class="chips"><li><i></i>Storage</li><li><i></i>Server</li><li><i></i>Networking</li></ul>
        <ul class="chips"><li><i></i>Data Protection</li><li><i></i>Core Client</li></ul>
        <button class="contact" type="button"><svg width="16" height="13"><use href="#mail"/></svg>Contact Partner</button>
      </div>
    </article>
    <article class="partner">
      <span class="badge badge--platinum">Platinum</span>
      <svg class="logo-box" viewBox="0 0 161 56" role="img" aria-label="Logo"><rect width="161" height="56" rx="2" fill="#eff3fb"/><path d="M0 1L161 55M0 55L161 1" stroke="#d5dce4"/><text x="80" y="34" text-anchor="middle">Logo</text></svg>
      <div class="partner__body">
        <h3>Nviron Ltd</h3><p class="kind">Distributor</p>
        <p class="address"><svg width="16" height="20"><use href="#pin"/></svg><span>Turnpike House, Methuen Park,<br>Chippenham, Wiltshire,SN14 0GF</span></p>
        <h4><i></i>Competencies</h4>
        <ul class="chips"><li><i></i>Storage</li><li><i></i>Server</li><li><i></i>Networking</li></ul>
        <ul class="chips"><li><i></i>Data Protection</li><li><i></i>Core Client</li></ul>
        <button class="contact" type="button"><svg width="16" height="13"><use href="#mail"/></svg>Contact Partner</button>
      </div>
    </article>
    <article class="partner">
      <span class="badge badge--platinum">Platinum</span>
      <svg class="logo-box" viewBox="0 0 161 56" role="img" aria-label="Logo"><rect width="161" height="56" rx="2" fill="#eff3fb"/><path d="M0 1L161 55M0 55L161 1" stroke="#d5dce4"/><text x="80" y="34" text-anchor="middle">Logo</text></svg>
      <div class="partner__body">
        <h3>Nviron Ltd</h3><p class="kind">Distributor</p>
        <p class="address"><svg width="16" height="20"><use href="#pin"/></svg><span>Turnpike House, Methuen Park,<br>Chippenham, Wiltshire,SN14 0GF</span></p>
        <h4><i></i>Competencies</h4>
        <ul class="chips"><li><i></i>Storage</li><li><i></i>Server</li><li><i></i>Networking</li></ul>
        <ul class="chips"><li><i></i>Data Protection</li><li><i></i>Core Client</li></ul>
        <button class="contact" type="button"><svg width="16" height="13"><use href="#mail"/></svg>Contact Partner</button>
      </div>
    </article>
  </div>
</footer>
</body>
</html>
```

FILE: styles.css
```css
:root {
  --ink: #29343a;
  --slate: #4a5a67;
  --steel: #8fa1b1;
  --mist: #9badbd;
  --panel: #f1f3f7;
  --text: #5c6b79;
}
* { box-sizing: border-box; }
body, h1, h2, h3, h4, p, ul, dl, dd { margin: 0; padding: 0; }
body { font-family: Roboto, "Liberation Sans", sans-serif; font-size: 16px; color: var(--ink); background: #fff; }
ul { list-style: none; }
a { color: inherit; }
button, select { font: inherit; color: inherit; cursor: pointer; }
svg { display: block; flex: none; }
.defs { position: absolute; width: 0; height: 0; }

.heading { font-size: 28px; line-height: 36px; font-weight: 700; color: var(--slate); text-align: center; }
.panel { background: var(--panel); margin: 0 50px; }
.button { width: 188px; height: 59px; border: 1px solid var(--mist); border-radius: 8px; color: #fff; font-size: 20px; font-weight: 500; }
.button--light { background: var(--mist); }
.button--dark { background: var(--slate); }

.header { display: grid; grid-template-columns: 1fr auto 1fr; align-items: center; height: 98px; background: var(--panel); }
.header .logo-box { margin-left: 29px; }
.header .button { justify-self: end; margin-right: 19px; }
.header__title { font-size: 25px; line-height: 32px; font-weight: 600; color: var(--slate); }
.logo-box { width: 161px; height: 56px; }
.logo-box--header { width: 158px; height: 65px; }
.logo-box text { font-size: 19px; font-weight: 300; fill: var(--steel); }

.tabs { display: flex; justify-content: space-between; align-items: center; height: 72px; margin: 0 96px; padding: 0 46px; border-radius: 0 0 4px 4px; background: #fff; box-shadow: 0 8px 16px rgba(0, 0, 0, .08); font-size: 16px; }
.tabs a { text-decoration: none; }
.tabs .is-active { font-weight: 600; text-decoration: underline; }

.achievements { margin-top: 44px; padding: 36px 0 80px; }
.awards { display: grid; grid-template-columns: repeat(5, 1fr); margin-top: 61px; padding: 0 59px 0 90px; }
.award { display: flex; flex-direction: column; align-items: center; text-align: center; }
.award svg { margin-top: auto; }
.award h3 { margin-top: 35px; font-size: 20px; line-height: 24px; font-weight: 500; white-space: nowrap; }
.award p { margin-top: 5px; font-size: 17px; line-height: 20px; color: var(--steel); }
.award--tight { padding-bottom: 11px; }
.award--tight h3 { margin-top: 24px; }

.endeavours { padding: 48px 0 50px; }
.case { display: grid; grid-template-columns: 620fr 642fr; column-gap: 124px; margin-top: 50px; padding: 0 125px 0 95px; }
.case--reverse { grid-template-columns: 642fr 620fr; column-gap: 110px; margin-top: 62px; padding: 0 108px 0 126px; }
.case__media { display: flex; flex-direction: column; align-items: center; height: 413px; border-radius: 8px; background: var(--steel); }
.case__media--video { justify-content: space-between; padding: 137px 0 31px; }
.play { display: grid; place-items: center; width: 121px; height: 121px; padding: 0 0 0 8px; border: 0; border-radius: 50%; background: #fff; }
.dots { display: flex; gap: 5px; }
.dots i { width: 30px; height: 8px; border-radius: 2px; background: #fff; }
.dots .is-active { background: var(--slate); }
.case__text { padding-top: 43px; }
.case--reverse .case__text { padding-top: 45px; }
.case__text h3 { font-size: 25px; line-height: 32px; font-weight: 500; }
.case__client { margin-top: 12px; font-size: 23px; line-height: 28px; color: var(--slate); }
.case__url { display: block; margin-top: 11px; font-size: 19px; line-height: 24px; color: var(--steel); text-decoration: none; }
.case__body { margin-top: 6px; font-size: 17px; line-height: 28px; }
.download { display: flex; gap: 10px; margin-top: 35px; font-size: 17px; line-height: 22px; }
.case--reverse .download { margin-top: 24px; }
.more { display: block; width: fit-content; margin: 51px auto 0; font-size: 20px; line-height: 28px; color: var(--slate); }

.reviews { padding: 48px 72px 44px 76px; }
.reviews .heading { padding-left: 32px; }
.reviews__grid { display: grid; grid-template-columns: 384fr 882fr; gap: 92px; margin-top: 43px; }
.summary { padding-top: 5px; }
.score { display: flex; flex-direction: column; align-items: center; height: 267px; padding-top: 39px; border-radius: 6px; background: var(--steel); }
.score strong { font-size: 84px; line-height: 84px; font-weight: 700; }
.score span { margin-top: 30px; font-size: 27px; line-height: 36px; color: #f4f5f8; }
.stars { display: flex; gap: 1px; height: 20px; }
.stars svg { width: 22px; height: 21px; }
.stars--large { gap: 1px; height: 41px; margin-top: 17px; }
.stars--large svg { width: 45px; height: 43px; }
.bars { display: grid; grid-template-columns: 80px 1fr; align-items: center; margin: 39px 20px 46px 6px; font-size: 18px; line-height: 32px; color: var(--text); }
.bars dd, .bars i { display: block; height: 5px; border-radius: 3px; }
.bars dd { background: #fff; }
.bars i { background: var(--text); }
.write { display: block; width: calc(100% - 6px); height: 67px; margin-left: 6px; border: 1px solid #5f6870; border-radius: 12px; background: #fff; font-size: 18px; font-weight: 500; color: var(--text); }
.reviews__bar { display: flex; justify-content: space-between; align-items: flex-end; height: 45px; }
.count { font-size: 31px; line-height: 36px; font-weight: 500; color: var(--slate); }
.sort { display: grid; align-self: flex-start; align-items: center; }
.sort > * { grid-area: 1 / 1; }
.sort select { width: 164px; height: 45px; padding: 0 0 0 13px; border: 1px solid #b6c2d0; border-radius: 4px; background: #fff; appearance: none; font-size: 19px; color: var(--slate); }
.sort svg { justify-self: end; margin-right: 16px; pointer-events: none; }
.reviews__list { display: grid; grid-template-columns: 1fr 1fr; gap: 49px 96px; margin-top: 30px; }
.review { font-size: 20px; line-height: 22px; }
.review h3 { margin-top: 18px; font-size: 25px; line-height: 28px; font-weight: 500; }
.review__meta { margin: 6px 0 4px; color: var(--steel); }
.pages { display: flex; justify-content: flex-end; gap: 5px; margin-top: 43px; }
.pages button { width: 47px; height: 47px; padding: 0; border: 1px solid #5f6870; border-radius: 6px; background: #fff; font-size: 18px; font-weight: 500; color: var(--text); }
.pages .is-active { background: var(--steel); color: #fff; }

.locations { padding: 45px 58px 39px 50px; }
.map { position: relative; height: 604px; margin-top: 33px; padding-right: 10px; border: 1px solid var(--steel); border-radius: 12px; overflow: hidden; background: #fff; }
.map__canvas { width: 100%; height: 100%; }
.roads { fill: none; stroke: #ebebeb; stroke-width: 3px; stroke-linejoin: round; }
.roads path, .water path { vector-effect: non-scaling-stroke; }
.roads .major { stroke-width: 6px; }
.water { fill: #c9d6d2; }
.water .river { fill: none; stroke: #c9d6d2; stroke-width: 9px; stroke-linejoin: round; }
.water .stream { fill: none; stroke: #c9d6d2; stroke-width: 3px; }
.water .ferry { fill: none; stroke: #a9b0b0; stroke-dasharray: 4 3; }
.map__canvas text { paint-order: stroke; }
.oval rect { fill: #fff; stroke: #a9abad; stroke-width: 2px; }
.oval text { font-size: 14px; text-anchor: middle; fill: #8c8e90; }
.interstate text { font-size: 14px; font-weight: 700; text-anchor: middle; fill: #fff; }
.town, .borough, .district { text-anchor: middle; }
.town text, .borough text, .district text { stroke: #fff; stroke-width: 3px; }
.town { font-size: 18px; fill: #5b5e63; }
.town--big { font-size: 20px; }
.town .city { font-size: 27px; font-weight: 500; fill: #3f4347; }
.borough { font-size: 16px; font-weight: 600; fill: #5f6f84; }
.district { font-size: 14px; font-weight: 500; fill: #93a3bd; letter-spacing: 1px; }
.road-name { font-size: 15px; fill: #808285; }
.water-name { font-size: 17px; fill: #101010; }
.places { position: absolute; top: 20px; left: 14px; width: 328px; height: 383px; padding: 24px 22px 0 25px; border-radius: 10px; background: #fff; box-shadow: 0 2px 6px rgba(0, 0, 0, .25); font-size: 19px; line-height: 21px; color: var(--text); }
.places__title { display: flex; align-items: center; gap: 8px; margin-bottom: 11px; font-size: 18px; line-height: 20px; font-weight: 500; color: var(--ink); }
.places__title--soft { margin-bottom: 14px; color: var(--slate); }
.places p + p { margin-top: 26px; }
.places__web { display: flex; align-items: center; gap: 7px; margin-top: 16px; font-size: 17px; line-height: 20px; color: var(--text); }
.social { display: flex; gap: 12px; margin-top: 13px; }
.social svg { width: 20px; height: 20px; }
.places hr { height: 1px; margin: 19px 0 14px -3px; border: 0; background: #b6c2d0; }
.toggle { position: absolute; top: 20px; right: 39px; display: flex; height: 46px; border: 2px solid var(--steel); border-radius: 8px; overflow: hidden; background: #fff; }
.toggle button { padding: 0 14px; border: 0; background: #fff; font-size: 12px; font-weight: 700; color: var(--slate); }
.toggle .is-active { padding: 0 12px 0 10px; background: var(--steel); color: #fff; }

.cta-row { position: relative; }
.cta { display: flex; flex-direction: column; align-items: center; gap: 31px; padding: 36px 0 37px; }
.to-top { position: absolute; top: 103px; right: 0; display: flex; flex-direction: column; align-items: center; gap: 4px; width: 41px; height: 34px; padding-top: 4px; border-radius: 2px 0 0 2px; background: var(--steel); font-size: 10px; line-height: 12px; font-weight: 600; color: #fff; text-decoration: none; }

.footer { margin-top: 42px; padding: 40px 35px 57px 36px; background: var(--steel); }
.footer__title { font-size: 28px; line-height: 36px; font-weight: 500; color: #fff; text-align: center; }
.partners { display: grid; grid-template-columns: repeat(4, 1fr); gap: 21px; margin-top: 52px; }
.partner { position: relative; height: 386px; padding: 8px 12px; border-radius: 7px; background: #fff; color: var(--slate); }
.badge { position: absolute; top: 0; right: 0; width: 90px; border-radius: 0 7px 0 8px; background: #4c5963; color: #fff; font-size: 15px; line-height: 33px; font-weight: 500; text-align: center; }
.badge--platinum { background: #6d808e; }
.partner__body { padding: 14px 0 0 5px; }
.partner h3 { font-size: 20px; line-height: 24px; font-weight: 600; color: var(--ink); white-space: nowrap; }
.kind { margin-top: 1px; font-size: 12px; line-height: 14px; color: var(--steel); }
.address { display: flex; gap: 14px; margin-top: 15px; font-size: 15px; line-height: 20px; }
.address svg { margin-top: 3px; }
.partner h4 { display: flex; align-items: center; gap: 11px; margin: 20px 0 17px; font-size: 15px; line-height: 19px; font-weight: 500; }
.partner h4 i { width: 19px; height: 19px; border-radius: 5px; background: var(--slate); }
.chips { display: flex; gap: 5px; margin-bottom: 13px; }
.chips li { display: flex; align-items: center; gap: 5px; height: 30px; padding: 0 8px; border-radius: 4px; background: var(--mist); color: #fff; font-size: 15px; font-weight: 300; white-space: nowrap; }
.chips i { width: 13px; height: 13px; border-radius: 3px; background: #fff; }
.contact { display: flex; align-items: center; gap: 7px; height: 48px; margin-top: 21px; padding: 0 9px; border: 1px solid #c5d0dc; border-radius: 6px; background: #fff; font-size: 17px; font-weight: 500; color: var(--slate); }
```
